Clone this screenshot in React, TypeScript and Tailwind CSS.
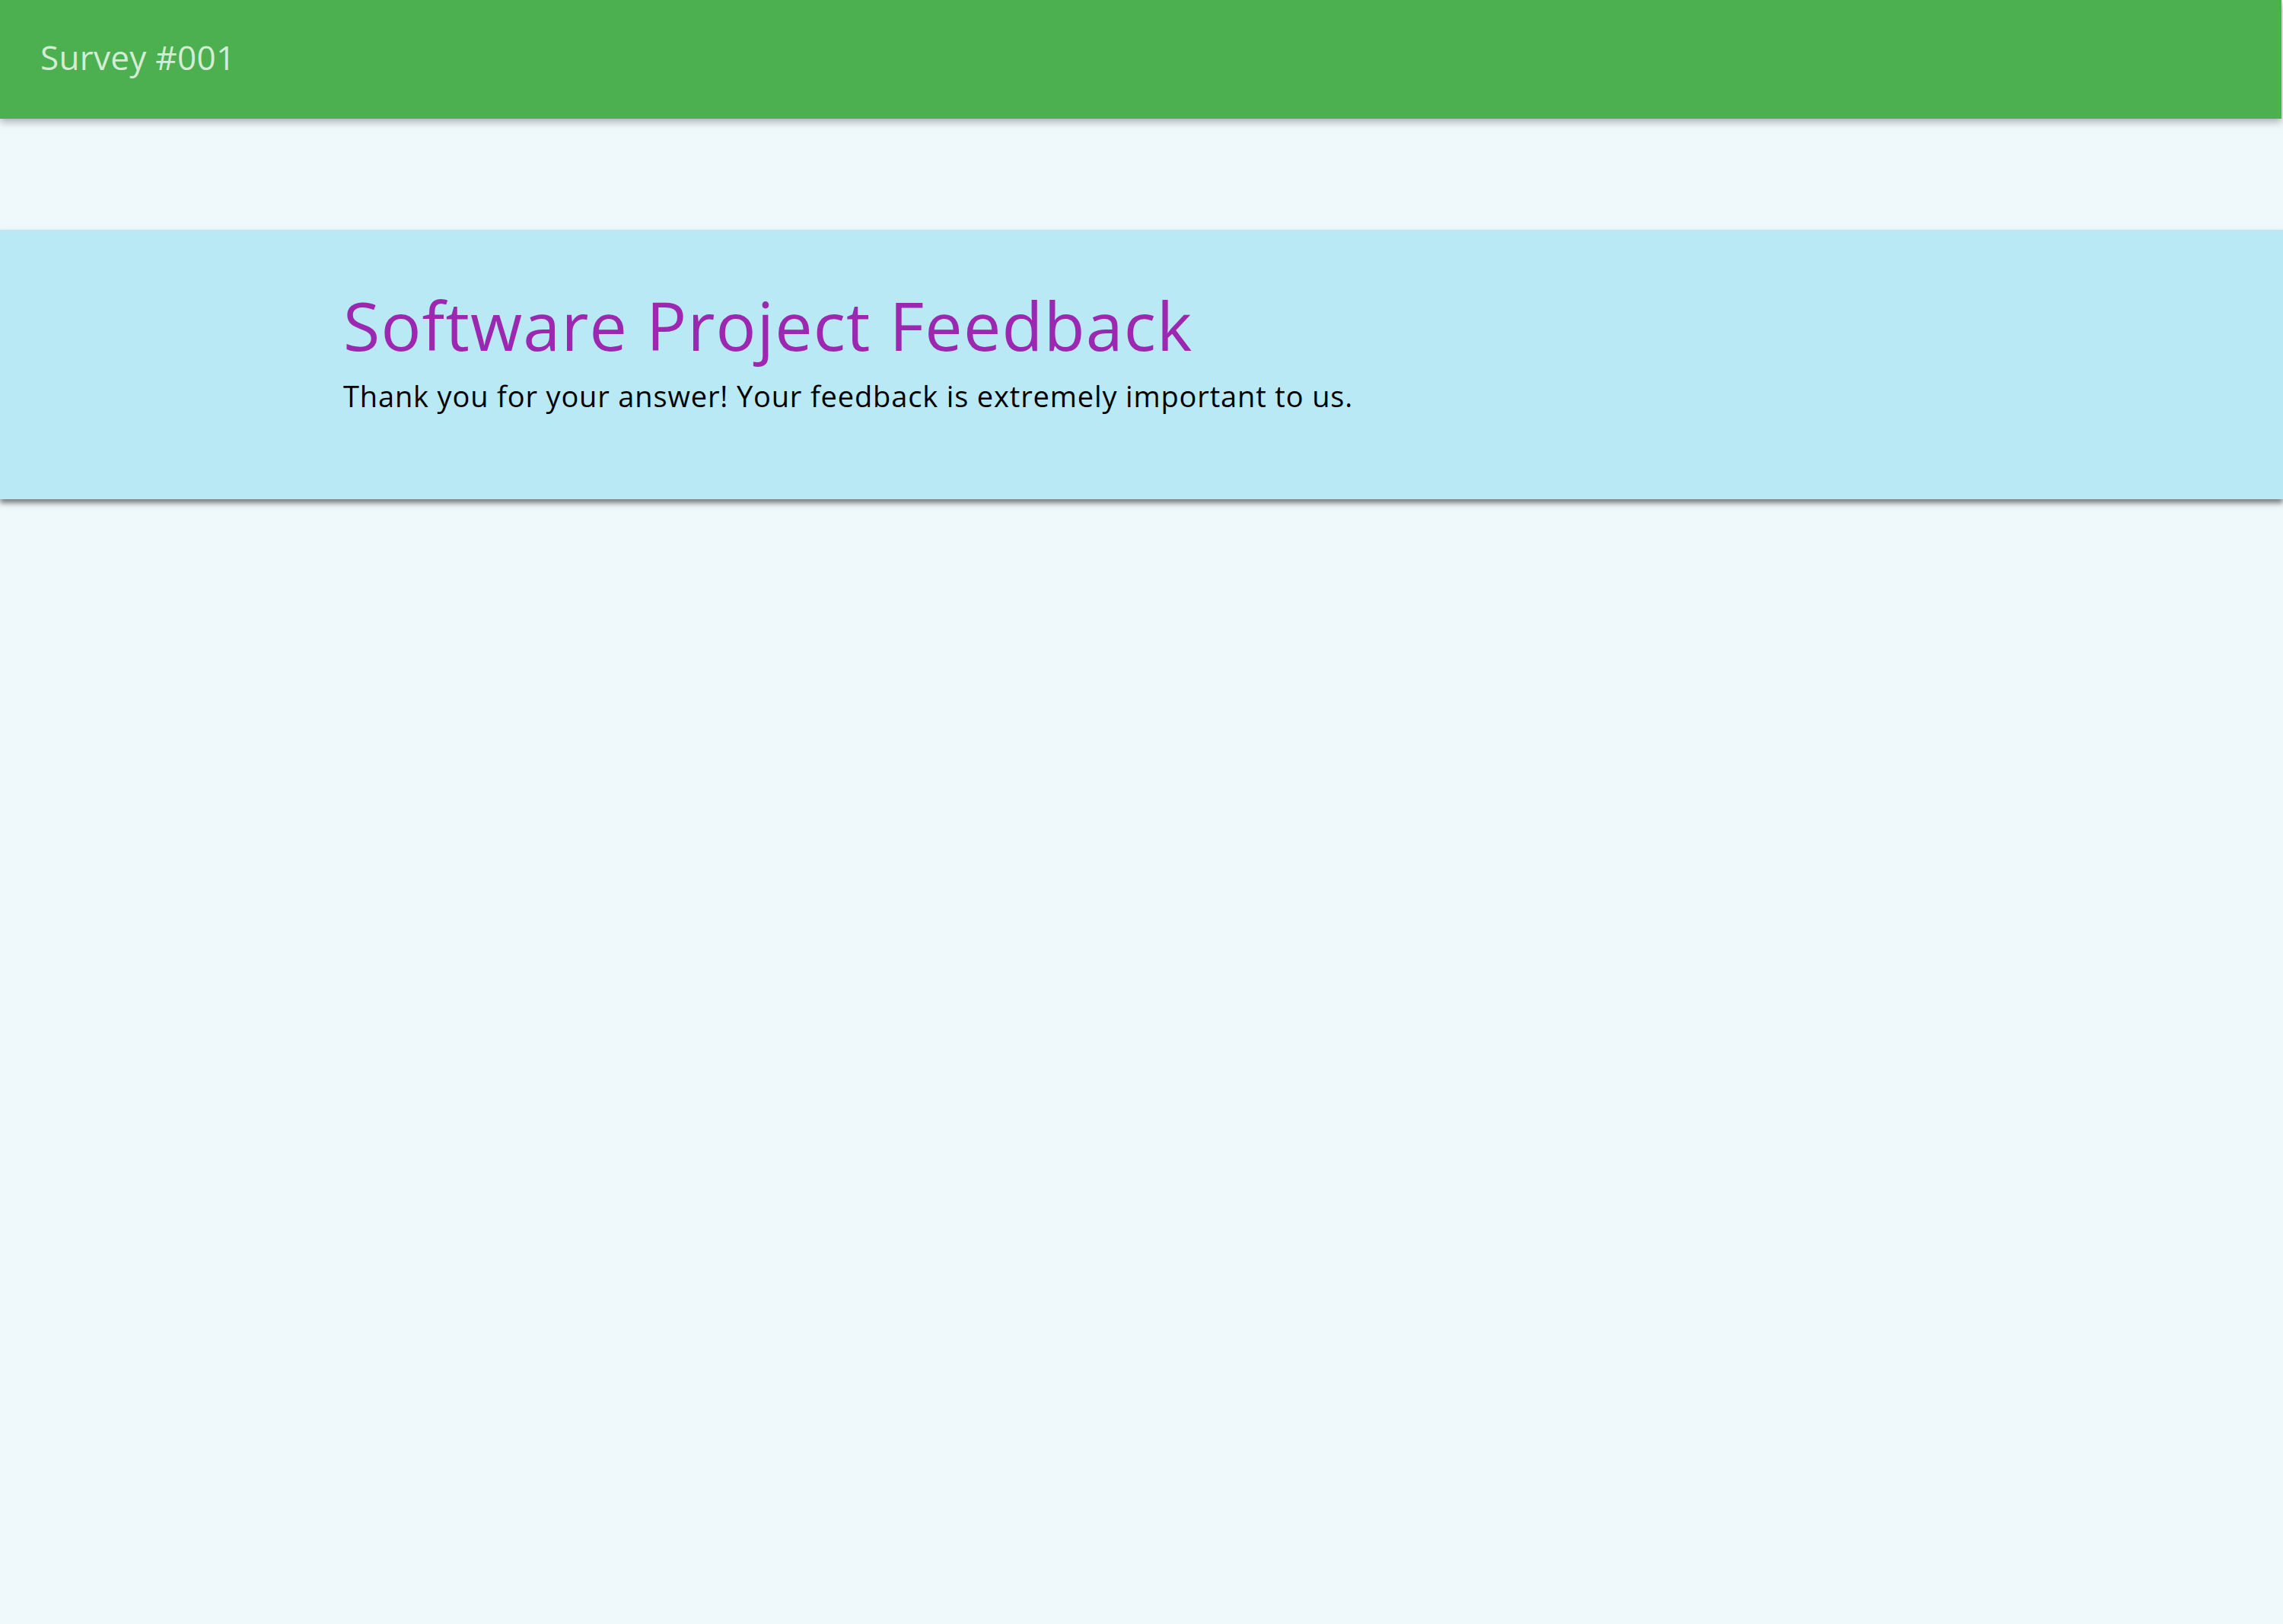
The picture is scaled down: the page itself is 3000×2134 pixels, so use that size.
export default function App() {
  return (
    <div className="min-h-[2134px] w-full bg-[#eff8fb]" style={{ fontFamily: '"Open Sans", "DejaVu Sans", sans-serif' }}>
      <header className="flex h-[156px] w-[2998px] items-center bg-[#4caf50] px-[53px] shadow-[0_4px_10px_rgba(0,0,0,0.3)]">
        <span className="pb-[6px] text-[44px] tracking-[0.3px] text-[#d3ecd4]">Survey #001</span>
      </header>
      <section className="mt-[146px] h-[354px] bg-[#b9e9f4] pl-[451px] pt-[73px] shadow-[0_5px_7px_rgba(0,0,0,0.5)]">
        <h1 className="text-[88px] leading-[1.2] tracking-[1.2px] text-[#9c27b0]">Software Project Feedback</h1>
        <p className="mt-[15px] text-[38px] leading-[1.3] tracking-[0.85px] text-black">
          Thank you for your answer! Your feedback is extremely important to us.
        </p>
      </section>
    </div>
  );
}
